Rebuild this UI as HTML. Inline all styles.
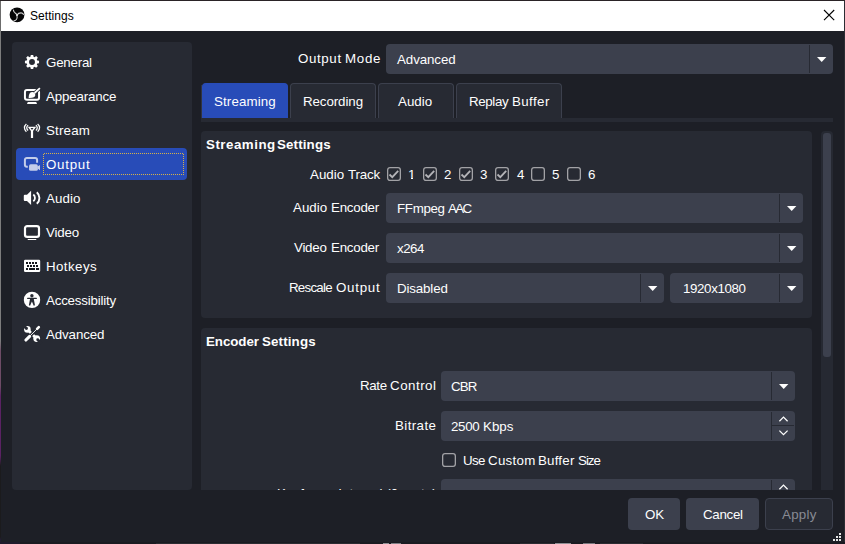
<!DOCTYPE html>
<html>
<head>
<meta charset="utf-8">
<title>Settings</title>
<style>
html,body{margin:0;padding:0;width:845px;height:544px;overflow:hidden;background:#1d1f26;}
body{font-family:"Liberation Sans",sans-serif;}
#w{position:absolute;left:0;top:0;width:845px;height:544px;overflow:hidden;background:#1d1f26;}
.b{position:absolute;box-sizing:border-box;}
.t{position:absolute;white-space:pre;line-height:1;color:#fefefe;font-size:13.33px;}
svg{position:absolute;overflow:visible;}
.cb{position:absolute;box-sizing:border-box;width:14px;height:14px;border:1px solid #a9abb2;border-radius:2.5px;}
.tab{position:absolute;box-sizing:border-box;top:83px;height:35px;background:#272a33;border:1px solid #3c404d;border-bottom:none;border-radius:4px 4px 0 0;}
.combo{position:absolute;box-sizing:border-box;height:30px;background:#3c404d;border-radius:4px;}
.sep{position:absolute;width:1px;background:#272a33;}
</style>
</head>
<body>
<div id="w">

<!-- window frame -->
<div class="b" style="left:0;top:0;width:845px;height:1px;background:#2a2326;"></div>
<div class="b" style="left:1px;top:1px;width:843px;height:30px;background:#fff;"></div>
<div class="b" style="left:0;top:1px;width:1px;height:543px;background:linear-gradient(180deg,#6c6c6c 0,#6c6c6c 30px,#7c7c7c 30px,#7c7c7c 340px,#6d4c66 350px,#6d4c66 385px,#5a2263 395px,#5a2263 455px,#1b1b1d 465px,#1b1b1d 536px,#221c30 538px);"></div>
<div class="b" style="left:844px;top:1px;width:1px;height:543px;background:#2b2d33;"></div>
<div class="b" style="left:0;top:542px;width:845px;height:2px;background:#1a1b21;"></div>
<div class="b" style="left:0;top:542px;width:20px;height:2px;background:#1f1b2c;"></div>
<div class="b" style="left:156px;top:543px;width:204px;height:1px;background:#2b2c32;"></div>
<div class="b" style="left:383px;top:543px;width:6px;height:1px;background:#8e8f94;"></div>
<div class="b" style="left:391px;top:543px;width:10px;height:1px;background:#7e7f85;"></div>
<div class="b" style="left:520px;top:543px;width:34px;height:1px;background:#2b2c32;"></div>
<div class="b" style="left:555px;top:543px;width:16px;height:1px;background:#8e8f94;"></div>
<div class="b" style="left:583px;top:543px;width:12px;height:1px;background:#77787e;"></div>
<div class="b" style="left:600px;top:543px;width:43px;height:1px;background:#2b2c32;"></div>
<!-- OBS logo -->
<svg style="left:9px;top:7px;" width="16" height="16" viewBox="0 0 16 16"><circle cx="8.050" cy="7.800" r="7.400" fill="#060607"/>
<g fill="none" stroke="#d2d2d2" stroke-width="1.100" stroke-linecap="round"><path d="M8 8.100C7.600 6.600 6 6.200 5.200 5C4.700 4.300 4.500 3.600 4.500 3"/><path d="M8 8.100C9 6.400 10.600 5.900 12 5.900C13.200 5.900 14 6.600 14.500 7.400"/><path d="M8 8.100C8.300 9.800 8.200 11.400 7.400 12.500C6.800 13.300 5.900 13.700 5 13.900"/></g><circle cx="8" cy="8.100" r="0.900" fill="#e8e8e8"/></svg>
<!-- close X -->
<svg style="left:824px;top:10px;" width="11" height="11" viewBox="0 0 11 11"><path d="M0 0L10.200 10.200M10.200 0L0 10.200" stroke="#000" stroke-width="1.100" fill="none"/></svg>

<!-- sidebar -->
<div class="b" style="left:12px;top:42px;width:180px;height:448px;background:#272a33;border-radius:4px;"></div>
<div class="b" style="left:16px;top:148px;width:171px;height:32px;background:#284cb8;border-radius:4px;"></div>
<div class="b" style="left:44px;top:153px;width:139px;height:1px;background:repeating-linear-gradient(90deg,#d7b347 0 1px,transparent 1px 2px);"></div>
<div class="b" style="left:43px;top:174px;width:141px;height:1px;background:repeating-linear-gradient(90deg,#d7b347 0 1px,transparent 1px 2px);"></div>
<div class="b" style="left:43px;top:154px;width:1px;height:20px;background:repeating-linear-gradient(180deg,#d7b347 0 1px,transparent 1px 2px);"></div>
<div class="b" style="left:183px;top:154px;width:1px;height:20px;background:repeating-linear-gradient(180deg,#d7b347 0 1px,transparent 1px 2px);"></div>

<!-- top combo -->
<div class="combo" style="left:386px;top:44px;width:447px;"></div>
<div class="sep" style="left:809px;top:45px;height:28px;"></div>
<svg style="left:817px;top:57px;" width="9" height="5" viewBox="0 0 9 5"><path d="M0 0H9.4L4.7 5Z" fill="#fefefe"/></svg>

<!-- tabs -->
<div class="tab" style="left:202px;width:85.500px;background:#284cb8;border-color:#284cb8;"></div>
<div class="tab" style="left:290px;width:86px;"></div>
<div class="tab" style="left:378px;width:76px;"></div>
<div class="tab" style="left:456px;width:106px;"></div>
<div class="b" style="left:201px;top:85px;width:1px;height:33px;background:#31343e;"></div>
<div class="b" style="left:201px;top:118px;width:632px;height:4px;background:#272a33;"></div>

<!-- scroll area: groups -->
<div class="b" style="left:201px;top:131px;width:611px;height:187px;background:#272a33;border-radius:4px;"></div>
<div class="b" style="left:201px;top:328px;width:611px;height:162px;background:#272a33;border-radius:4px 4px 0 0;"></div>
<!-- scrollbar -->
<div class="b" style="left:821px;top:131px;width:12px;height:359px;background:#262932;border-radius:4px 4px 0 0;"></div>
<div class="b" style="left:823px;top:133px;width:8px;height:224px;background:#3c404d;border-radius:3px;"></div>

<!-- audio track checkboxes -->
<svg style="left:387px;top:167px;" width="14" height="14" viewBox="0 0 14 14"><rect x="0.65" y="0.65" width="12.7" height="12.7" rx="2.3" fill="none" stroke="#a2a2a6" stroke-width="1.3"/></svg>
<svg style="left:423px;top:167px;" width="14" height="14" viewBox="0 0 14 14"><rect x="0.65" y="0.65" width="12.7" height="12.7" rx="2.3" fill="none" stroke="#a2a2a6" stroke-width="1.3"/></svg>
<svg style="left:459px;top:167px;" width="14" height="14" viewBox="0 0 14 14"><rect x="0.65" y="0.65" width="12.7" height="12.7" rx="2.3" fill="none" stroke="#a2a2a6" stroke-width="1.3"/></svg>
<svg style="left:495px;top:167px;" width="14" height="14" viewBox="0 0 14 14"><rect x="0.65" y="0.65" width="12.7" height="12.7" rx="2.3" fill="none" stroke="#a2a2a6" stroke-width="1.3"/></svg>
<svg style="left:531px;top:167px;" width="14" height="14" viewBox="0 0 14 14"><rect x="0.65" y="0.65" width="12.7" height="12.7" rx="2.3" fill="none" stroke="#a2a2a6" stroke-width="1.3"/></svg>
<svg style="left:567px;top:167px;" width="14" height="14" viewBox="0 0 14 14"><rect x="0.65" y="0.65" width="12.7" height="12.7" rx="2.3" fill="none" stroke="#a2a2a6" stroke-width="1.3"/></svg>
<svg style="left:387px;top:167px;" width="160" height="14" viewBox="0 0 160 14"><g fill="none" stroke="#b4b4b8" stroke-width="1.8"><path d="M2.5 7.500L5.3 10.200L11.2 3.900"/><path d="M38.5 7.500L41.3 10.200L47.2 3.900"/><path d="M74.5 7.500L77.3 10.200L83.2 3.900"/><path d="M110.5 7.500L113.3 10.200L119.2 3.900"/></g></svg>

<!-- combos group1 -->
<div class="combo" style="left:386px;top:193px;width:417px;"></div>
<div class="sep" style="left:779px;top:194px;height:28px;"></div>
<svg style="left:787px;top:206px;" width="9" height="5" viewBox="0 0 9 5"><path d="M0 0H9.4L4.7 5Z" fill="#fefefe"/></svg>
<div class="combo" style="left:386px;top:233px;width:417px;"></div>
<div class="sep" style="left:779px;top:234px;height:28px;"></div>
<svg style="left:787px;top:246px;" width="9" height="5" viewBox="0 0 9 5"><path d="M0 0H9.4L4.7 5Z" fill="#fefefe"/></svg>
<div class="combo" style="left:386px;top:273px;width:278px;"></div>
<div class="sep" style="left:640px;top:274px;height:28px;"></div>
<svg style="left:648px;top:286px;" width="9" height="5" viewBox="0 0 9 5"><path d="M0 0H9.4L4.7 5Z" fill="#fefefe"/></svg>
<div class="combo" style="left:670px;top:273px;width:133px;"></div>
<div class="sep" style="left:779px;top:274px;height:28px;"></div>
<svg style="left:787px;top:286px;" width="9" height="5" viewBox="0 0 9 5"><path d="M0 0H9.4L4.7 5Z" fill="#fefefe"/></svg>

<!-- group2 controls -->
<div class="combo" style="left:441px;top:371px;width:354px;"></div>
<div class="sep" style="left:771px;top:372px;height:28px;"></div>
<svg style="left:779px;top:384px;" width="9" height="5" viewBox="0 0 9 5"><path d="M0 0H9.4L4.7 5Z" fill="#fefefe"/></svg>
<div class="combo" style="left:441px;top:411px;width:354px;"></div>
<div class="sep" style="left:771px;top:412px;height:28px;"></div>
<div class="b" style="left:772px;top:425px;width:22px;height:1px;background:#272a33;"></div>
<svg style="left:777px;top:411px;" width="14" height="30" viewBox="0 0 14 30"><g fill="none" stroke="#fefefe" stroke-width="1.25"><path d="M2.4 10.2L6.500 6.100L10.600 10.200"/><path d="M2.400 19.600L6.500 23.700L10.600 19.600"/></g></svg>
<svg style="left:442px;top:453px;" width="14" height="14" viewBox="0 0 14 14"><rect x="0.65" y="0.65" width="12.7" height="12.7" rx="2.3" fill="none" stroke="#a2a2a6" stroke-width="1.3"/></svg>
<div class="b" style="left:441px;top:479px;width:354px;height:11px;background:#3c404d;border-radius:4px 4px 0 0;"></div>
<div class="sep" style="left:771px;top:480px;height:10px;"></div>
<svg style="left:777px;top:479px;" width="14" height="11" viewBox="0 0 14 11"><path d="M2.400 10.200L6.500 6.100L10.600 10.200" fill="none" stroke="#fefefe" stroke-width="1.250"/></svg>

<!-- buttons -->
<div class="b" style="left:628px;top:498px;width:52px;height:32px;background:#3c404d;border-radius:4px;"></div>
<div class="b" style="left:686px;top:498px;width:73px;height:32px;background:#3c404d;border-radius:4px;"></div>
<div class="b" style="left:765px;top:498px;width:68px;height:32px;background:#272a33;border:1px solid #3c404d;border-radius:4px;"></div>
<!-- size grip -->
<svg style="left:833px;top:533px;" width="8" height="8" viewBox="0 0 8 8" shape-rendering="crispEdges"><g fill="#e6e6e6"><rect x="6" y="0" width="2" height="2"/><rect x="3" y="3" width="2" height="2"/><rect x="6" y="3" width="2" height="2"/><rect x="0" y="6" width="2" height="2"/><rect x="3" y="6" width="2" height="2"/><rect x="6" y="6" width="2" height="2"/></g></svg>

<!-- sidebar icons -->
<!-- General: gear -->
<svg style="left:24px;top:54px;" width="16" height="16" viewBox="0 0 16 16"><path fill="#fefefe" fill-rule="evenodd" d="M6.800 0.900h2.400l.35 1.800 1.050.45 1.550-1.050 1.700 1.700-1.050 1.550.45 1.050 1.800.35v2.400l-1.800.35-.45 1.050 1.050 1.550-1.700 1.700-1.550-1.050-1.050.45-.35 1.800H6.800l-.35-1.800-1.050-.45-1.550 1.050-1.700-1.700 1.050-1.550-.45-1.050-1.800-.35V6.750l1.800-.35.45-1.050-1.050-1.550 1.700-1.700 1.550 1.050 1.050-.45ZM8 5.050a2.950 2.950 0 1 0 0 5.900 2.950 2.950 0 0 0 0-5.900Z"/></svg>
<!-- Appearance -->
<svg style="left:24px;top:88px;" width="16" height="16" viewBox="0 0 16 16"><rect x="0.950" y="1.950" width="14.100" height="9.850" rx="2" fill="none" stroke="#fefefe" stroke-width="2"/><path d="M3.800 14.100H12.200L13 16.100H3Z" fill="#fefefe"/><path d="M17 -1L10.400 5.200" stroke="#272a33" stroke-width="3.600" fill="none"/><path d="M15.900 0.100L10.500 5" stroke="#fefefe" stroke-width="1.800" fill="none"/><path d="M4.700 10C4.600 7 5.400 4.100 8.100 3.900C10.200 3.800 11.500 5.500 11.300 7.300C11 9.500 9.100 10.100 4.700 10Z" fill="#fefefe"/></svg>
<!-- Stream -->
<svg style="left:24px;top:122px;" width="16" height="16" viewBox="0 0 16 16"><g fill="none" stroke="#fefefe" stroke-width="1.300"><path d="M2.400 1.900C-0.200 4.100 -0.200 7.500 2.400 9.700"/><path d="M4.100 3.100C2.300 4.800 2.300 6.800 4.100 8.500"/><path d="M13.600 1.900C16.200 4.100 16.200 7.500 13.600 9.700"/><path d="M11.900 3.100C13.700 4.800 13.700 6.800 11.900 8.500"/></g><path fill="#fefefe" fill-rule="evenodd" d="M3.800 4.800H12.200L9.100 9V16H6.900V9ZM6.500 6.100H9.500L8 7.900Z"/></svg>
<!-- Output -->
<svg style="left:24px;top:156px;" width="16" height="16" viewBox="0 0 16 16"><path d="M3.800 10.750H2.900a2 2 0 0 1-2-2V3.950a2 2 0 0 1 2-2h8.200a2 2 0 0 1 2 2V6.700" fill="none" stroke="#c4cdea" stroke-width="2"/><rect x="5.050" y="8.300" width="8.800" height="6.550" rx="1.600" fill="#c4cdea"/><path d="M13.500 10.600L16 9V14.200L13.500 12.600Z" fill="#c4cdea"/></svg>
<!-- Audio -->
<svg style="left:24px;top:190px;" width="16" height="16" viewBox="0 0 16 16"><path d="M-0.200 5.700a1 1 0 0 1 1-1H3L7.100 0.700V15.100L3 11.100H0.800a1 1 0 0 1-1-1Z" fill="#fefefe"/><g fill="none" stroke="#fefefe"><path d="M9.300 4.500C11.500 6.300 11.500 9.500 9.300 11.300" stroke-width="1.800"/><path d="M12.800 2.300C16.300 5.400 16.300 10.600 12.800 13.700" stroke-width="1.900"/></g></svg>
<!-- Video -->
<svg style="left:24px;top:224px;" width="16" height="16" viewBox="0 0 16 16"><rect x="1" y="2.050" width="14" height="10.900" rx="2.200" fill="none" stroke="#fefefe" stroke-width="2.200"/><path d="M4.200 15.500H11.800" stroke="#fefefe" stroke-width="1.200" stroke-linecap="round" fill="none"/></svg>
<!-- Hotkeys -->
<svg style="left:24px;top:258px;" width="17" height="16" viewBox="0 0 17 16"><rect x="0" y="1.800" width="16.200" height="12.200" rx="1.200" fill="#fefefe"/><g fill="#15171c"><rect x="2" y="4" width="2" height="2"/><rect x="5" y="4" width="2" height="2"/><rect x="8" y="4" width="2" height="2"/><rect x="11" y="4" width="2" height="2"/><rect x="3" y="7" width="2" height="2"/><rect x="6" y="7" width="2" height="2"/><rect x="9" y="7" width="2" height="2"/><rect x="12" y="7" width="2" height="2"/><rect x="2" y="10" width="2" height="2"/><rect x="5" y="10" width="6" height="2"/><rect x="12" y="10" width="3.100" height="2"/></g></svg>
<!-- Accessibility -->
<svg style="left:24px;top:292px;" width="17" height="17" viewBox="0 0 17 17"><circle cx="8" cy="7.900" r="8.200" fill="#fefefe"/><g fill="#272a33"><circle cx="7.900" cy="3.700" r="1.700"/><rect x="3.100" y="5.850" width="9.800" height="1.050" rx="0.500"/><path d="M6.100 6.500H9.700L10.950 13.300L9.750 13.700L7.900 9.500L6.050 13.700L4.850 13.300Z"/></g></svg>
<!-- Advanced -->
<svg style="left:24px;top:326px;" width="17" height="17" viewBox="0 0 17 17"><path d="M3.500 3.500L12.500 12.500" stroke="#fefefe" stroke-width="2.600" fill="none"/><circle cx="3.400" cy="3.400" r="3.300" fill="#fefefe"/><circle cx="12.700" cy="12.600" r="3.400" fill="#fefefe"/><g stroke="#272a33" stroke-width="2.800" fill="none"><path d="M2.500 2.500L-1 -1"/><path d="M13.700 13.700L17.500 17.500"/></g><circle cx="2.500" cy="2.500" r="1.400" fill="#272a33"/><circle cx="13.700" cy="13.700" r="1.400" fill="#272a33"/><path d="M4.200 11.800L11.800 4.200" stroke="#272a33" stroke-width="3.200" fill="none"/><path d="M6.300 9.700L12.800 3.200" stroke="#fefefe" stroke-width="0.900" fill="none"/><path d="M1.900 14L5.600 10.400" stroke="#fefefe" stroke-width="3.100" stroke-linecap="round" fill="none"/><path d="M13.100 2.900L14.800 1.200" stroke="#fefefe" stroke-width="2.600" stroke-linecap="round" fill="none"/></svg>

<span class="t" style="left:30px;top:10.34px;font-size:12px;color:#000;letter-spacing:0.043px;">Settings</span>
<span class="t" style="left:46px;top:55.72px;letter-spacing:-0.233px;">General</span>
<span class="t" style="left:46px;top:89.72px;letter-spacing:-0.156px;">Appearance</span>
<span class="t" style="left:46px;top:123.72px;letter-spacing:0.180px;">Stream</span>
<span class="t" style="left:46px;top:157.72px;letter-spacing:0.720px;">Output</span>
<span class="t" style="left:46px;top:191.72px;letter-spacing:0.100px;">Audio</span>
<span class="t" style="left:46px;top:225.72px;letter-spacing:-0.150px;">Video</span>
<span class="t" style="left:46px;top:259.72px;letter-spacing:0.417px;">Hotkeys</span>
<span class="t" style="left:46px;top:293.72px;letter-spacing:-0.208px;">Accessibility</span>
<span class="t" style="left:46px;top:327.72px;letter-spacing:-0.114px;">Advanced</span>
<span class="t" style="left:298px;top:51.72px;letter-spacing:0.620px;">Output</span>
<span class="t" style="left:345px;top:51.72px;letter-spacing:0.700px;">Mode</span>
<span class="t" style="left:397px;top:52.72px;letter-spacing:-0.086px;">Advanced</span>
<span class="t" style="left:214px;top:94.72px;letter-spacing:0.125px;">Streaming</span>
<span class="t" style="left:303px;top:94.72px;letter-spacing:-0.088px;">Recording</span>
<span class="t" style="left:398px;top:94.72px;letter-spacing:0.025px;">Audio</span>
<span class="t" style="left:469px;top:94.72px;letter-spacing:-0.360px;">Replay</span>
<span class="t" style="left:512px;top:94.72px;letter-spacing:0.400px;">Buffer</span>
<span class="t" style="left:206px;top:137.52px;font-weight:700;letter-spacing:0.500px;">Streaming</span>
<span class="t" style="left:277px;top:137.52px;font-weight:700;letter-spacing:0.143px;">Settings</span>
<span class="t" style="left:310px;top:167.72px;">Audio</span>
<span class="t" style="left:348px;top:167.72px;letter-spacing:-0.150px;">Track</span>
<span class="t" style="left:408px;top:167.72px;">1</span>
<span class="t" style="left:444px;top:167.72px;">2</span>
<span class="t" style="left:480px;top:167.72px;">3</span>
<span class="t" style="left:517px;top:167.72px;">4</span>
<span class="t" style="left:552px;top:167.72px;">5</span>
<span class="t" style="left:588px;top:167.72px;">6</span>
<span class="t" style="left:293px;top:200.72px;">Audio</span>
<span class="t" style="left:331px;top:200.72px;letter-spacing:-0.250px;">Encoder</span>
<span class="t" style="left:397px;top:201.72px;letter-spacing:-0.320px;">FFmpeg</span>
<span class="t" style="left:448px;top:201.72px;letter-spacing:-1.650px;">AAC</span>
<span class="t" style="left:294px;top:240.72px;letter-spacing:-0.250px;">Video</span>
<span class="t" style="left:331px;top:240.72px;letter-spacing:-0.250px;">Encoder</span>
<span class="t" style="left:397px;top:241.72px;letter-spacing:-0.533px;">x264</span>
<span class="t" style="left:289px;top:280.72px;letter-spacing:-0.767px;">Rescale</span>
<span class="t" style="left:336px;top:280.72px;letter-spacing:0.740px;">Output</span>
<span class="t" style="left:397px;top:281.72px;letter-spacing:-0.143px;">Disabled</span>
<span class="t" style="left:683px;top:281.72px;letter-spacing:-0.375px;">1920x1080</span>
<span class="t" style="left:206px;top:334.72px;font-weight:700;letter-spacing:-0.067px;">Encoder</span>
<span class="t" style="left:262px;top:334.72px;font-weight:700;letter-spacing:0.143px;">Settings</span>
<span class="t" style="left:360px;top:378.72px;letter-spacing:-0.333px;">Rate</span>
<span class="t" style="left:390px;top:378.72px;letter-spacing:0.500px;">Control</span>
<span class="t" style="left:451px;top:379.72px;letter-spacing:-0.900px;">CBR</span>
<span class="t" style="left:395px;top:419.22px;letter-spacing:0.400px;">Bitrate</span>
<span class="t" style="left:451px;top:419.72px;letter-spacing:-0.300px;">2500</span>
<span class="t" style="left:483px;top:419.72px;">Kbps</span>
<span class="t" style="left:463px;top:454.22px;letter-spacing:-0.700px;">Use</span>
<span class="t" style="left:488px;top:454.22px;letter-spacing:0.280px;">Custom</span>
<span class="t" style="left:538px;top:454.22px;letter-spacing:0.200px;">Buffer</span>
<span class="t" style="left:578px;top:454.22px;letter-spacing:-1.000px;">Size</span>
<span class="t" style="left:277px;top:486.72px;letter-spacing:0.060px;">Keyframe Interval (0=auto)</span>
<span class="t" style="left:645px;top:507.72px;">OK</span>
<span class="t" style="left:703px;top:507.72px;letter-spacing:-0.300px;">Cancel</span>
<span class="t" style="left:782px;top:507.72px;color:#878a93;letter-spacing:0.250px;">Apply</span>
<!-- cover below scroll area -->
<div class="b" style="left:193px;top:490px;width:430px;height:14px;background:#1d1f26;"></div>
<!-- serif cover for digit 1 -->
<div class="b" style="left:407px;top:178px;width:4px;height:1px;background:#272a33;"></div>
<div class="b" style="left:413px;top:178px;width:4px;height:1px;background:#272a33;"></div>


</div>
</body>
</html>
